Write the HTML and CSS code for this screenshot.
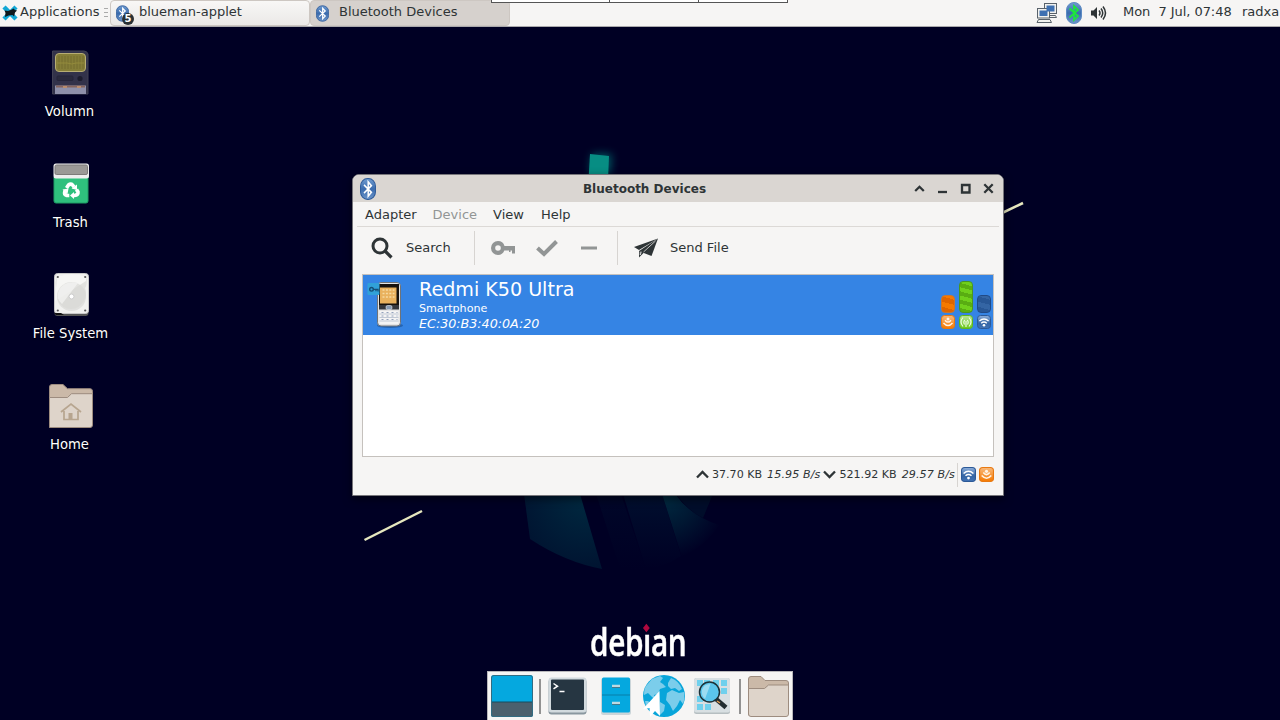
FILE: index.html
```html
<!DOCTYPE html>
<html lang="en">
<head>
<meta charset="utf-8">
<title>Desktop</title>
<link rel="stylesheet" href="styles.css">
</head>
<body>
<svg width="0" height="0" class="defs">
  <defs>
    <linearGradient id="blueG" x1="0" y1="0" x2="0" y2="1"><stop offset="0" stop-color="#6f9bd0"/><stop offset=".5" stop-color="#3b6cae"/><stop offset="1" stop-color="#6c95c9"/></linearGradient>
    <linearGradient id="orG" x1="0" y1="0" x2="0" y2="1"><stop offset="0" stop-color="#f8b97c"/><stop offset="1" stop-color="#f57900"/></linearGradient>
    <linearGradient id="grG" x1="0" y1="0" x2="0" y2="1"><stop offset="0" stop-color="#b9e59a"/><stop offset="1" stop-color="#6cc81c"/></linearGradient>
    <linearGradient id="wiG" x1="0" y1="0" x2="0" y2="1"><stop offset="0" stop-color="#8fb0dc"/><stop offset=".6" stop-color="#3465a4"/><stop offset="1" stop-color="#4273b5"/></linearGradient>
    <radialGradient id="tealA" gradientUnits="userSpaceOnUse" cx="585" cy="500" r="75"><stop offset="0" stop-color="#00283f"/><stop offset="1" stop-color="#001230"/></radialGradient>
    <radialGradient id="tealB" gradientUnits="userSpaceOnUse" cx="665" cy="497" r="62"><stop offset="0" stop-color="#002a40"/><stop offset=".5" stop-color="#001732"/><stop offset="1" stop-color="#000024"/></radialGradient>
    <linearGradient id="tealC" x1="0" y1="0" x2="0" y2="1"><stop offset="0" stop-color="#000f2e"/><stop offset="1" stop-color="#000024"/></linearGradient>
    <filter id="glow" x="-1" y="-1" width="3" height="3"><feGaussianBlur stdDeviation="4"/></filter>
    <symbol id="bt" viewBox="0 0 16 20"><rect x=".5" y=".5" width="15" height="19" rx="7" fill="url(#blueG)" stroke="#305d9b"/><path d="M4 6.2 11.4 13 8.2 16.5V3.5L11.4 7 4 13.8" fill="none" stroke="#fff" stroke-width="1.5"/></symbol>
    <symbol id="serial" viewBox="0 0 14 14"><rect x=".5" y=".5" width="13" height="13" rx="3" fill="url(#orG)" stroke="#e87911"/><path d="M2.500 8Q7 13 11.500 8M4 5.200Q7 9 10 5.200" fill="none" stroke="#fff3e5" stroke-width="1.500"/><circle cx="7" cy="4" r="1.500" fill="#fff3e5"/></symbol>
    <symbol id="wifi" viewBox="0 0 14 14"><rect x=".5" y=".5" width="13" height="13" rx="3" fill="url(#wiG)" stroke="#2c5997"/><path d="M2.400 6.100Q7 2 11.600 6.100M4.200 8.200Q7 5.800 9.800 8.200" fill="none" stroke="#fff" stroke-width="1.400"/><circle cx="7" cy="10.300" r="1.300" fill="#fff"/></symbol>
  </defs>
</svg>

<div class="desktop">
  <svg class="wallpaper" width="1280" height="720" viewBox="0 0 1280 720">
    <path d="M592 154h20l-2 20h-20z" fill="#00a99a" opacity=".5" filter="url(#glow)"/>
    <path d="M590 154 609 156 608 180H588.500z" fill="#078d83"/>
    <path d="M364.500 540 422 511" stroke="#e6e7bf" stroke-width="2.500"/>
    <path d="M1000 214 1023 203" stroke="#e6e7bf" stroke-width="2.500"/>
    <path d="M524 494H580L602 569Q565 562 530 539z" fill="url(#tealA)"/>
    <path d="M596 494H621L646 570 620 568z" fill="url(#tealC)" opacity=".45"/>
    <path d="M623 494H662L681 556Q665 567 646 569z" fill="url(#tealC)"/>
    <path d="M662 494H675Q691 516 719 525Q708 544 682 557z" fill="url(#tealB)"/>
    <path d="M676 494H713L703 518Q688 511 676 494z" fill="#000d2a"/>
  </svg>

  <div class="brand"><span>deb</span><span class="brand-i">ı<i class="diamond"></i></span><span>an</span></div>

  <div class="shortcuts">
    <div class="shortcut">
      <svg width="48" height="48" viewBox="0 0 48 48"><path d="M5.500 1H37q3 0 4 3V44H5.500z" fill="#32324a" stroke="#414153"/><rect x="8.500" y="3.500" width="30" height="18" rx="3.500" fill="#857e38" stroke="#b7ad74"/><path d="M12 6v13M15 6v13M18 6v13M21 6v13M24 6v13M27 6v13M30 6v13M33 6v13M36 6v13" stroke="#746c2f"/><path d="M10 13h10q5 2 9 0h8" stroke="#948b3c" fill="none"/><rect x="10" y="26" width="16" height="4.500" rx="1" fill="#2a2a3e" stroke="#25253a"/><circle cx="33" cy="28.500" r="2.600" fill="#1d1d2e"/><path d="M8 35.500h31V44H8z" fill="#8e90aa"/><path d="M9 35.500h29v2H9z" fill="#85645d"/><path d="M16 36h4v2h-4zM30 36h4v2h-4z" fill="#b98c6d"/></svg>
      <span class="nudge-a">Volumn</span>
    </div>
    <div class="shortcut">
      <svg width="48" height="48" viewBox="0 0 48 48"><path d="M7 16H41V40q0 2-2 2H9q-2 0-2-2z" fill="#2fc07d" stroke="#1e9d64"/><rect x="6.500" y="2.500" width="35.500" height="15" rx="2.500" fill="#eee"/><rect x="8" y="4" width="32.500" height="9.500" rx="1.500" fill="#9b9996" stroke="#7d7b79"/><g fill="none" stroke="#fff" stroke-width="3.600"><path d="M19.500 27l2-3q2.500-2 4.500 .5l1 1.500M29.500 28.500l1.500 2.500q.5 3-3.500 3.500h-1.500M22.300 34.500h-2.500q-3-1-2-4l.5-1"/></g><path d="M24.500 27.500l5.500-4v5.500zM27 31v7l-4-3.500zM15.500 28.500l6-1-1 5.500z" fill="#fff"/></svg>
      <span class="nudge-b">Trash</span>
    </div>
    <div class="shortcut">
      <svg width="48" height="48" viewBox="0 0 48 48"><rect x="7.500" y="3" width="34" height="41" rx="3" fill="#555"/><rect x="7.500" y="1.500" width="34" height="40" rx="3" fill="#f1f1ef" stroke="#c9c9c9"/><path d="M7 41h7l3 2H9z" fill="#111"/><path d="M10 5q14-5 29 0 2 7-1 11 2 5 0 11-5 10-14 10t-14-10q-2-6 0-11-3-4 0-11z" fill="#e2e2df"/><path d="M8 29 39 9V5Q25-1 10 5z" fill="#f6f6f4"/><circle cx="24.500" cy="24.500" r="14.500" fill="#d7d7d4" opacity=".65"/><path d="M12 18Q18 8 31 11L15 32Q8 26 12 18z" fill="#f5f5f3" opacity=".7"/><circle cx="24.500" cy="24.500" r="2.500" fill="#fff" stroke="#ccc"/><g fill="#555"><circle cx="10.800" cy="5" r="1.100"/><circle cx="38.200" cy="5" r="1.100"/><circle cx="10.800" cy="38.500" r="1.100"/><circle cx="38.200" cy="38.500" r="1.100"/></g></svg>
      <span class="nudge-b">File System</span>
    </div>
    <div class="shortcut">
      <svg width="48" height="48" viewBox="0 0 48 48"><path d="M2.500 44V4q0-2.500 2.500-2.500h11l4.500 4.200H43q2.500 0 2.500 2.500V22z" fill="#cbb9a8" stroke="#9d8c7f"/><path d="M2.500 44.500V14.500h18l4-3.800H45.500V42q0 2.500-2.500 2.500z" fill="#ded4ca" stroke="#9d8c7f"/><path d="M14 29l10-8 10 8M17 28v8.500h14V28" fill="none" stroke="#b7a58f" stroke-width="1.700"/><path d="M21.500 30h4v6h-4z" fill="#b7a58f"/></svg>
      <span class="nudge-a">Home</span>
    </div>
  </div>

  <header class="panel">
    <div class="apps">
      <svg width="16" height="16" viewBox="0 0 16 16"><path d="M2 2 14 14M14 2 2 14" stroke="#12a7d5" stroke-width="4.500"/><path d="M2.500 5.500 6 6l4-1.500 1.500-1L13 5l2 .5-2 2-1 4-1.500-1.500-4 .5L3 12l.5-4z" fill="#10181c"/></svg>
      <span class="apps-label">Applications</span>
      <i class="grip"></i>
    </div>
    <div class="task">
      <span class="task-icon"><svg width="13" height="17"><use href="#bt"/></svg><b class="count">5</b></span>
      <span class="task-label">blueman-applet</span>
    </div>
    <div class="task task-active">
      <span class="task-icon"><svg width="13" height="17"><use href="#bt"/></svg></span>
      <span class="task-label">Bluetooth Devices</span>
    </div>
    <div class="tray">
      <svg width="22" height="22" viewBox="0 0 22 22"><g stroke="#59626b" fill="#f2f2ef"><rect x="8.500" y="1.500" width="12" height="10"/><path d="M9 15.500h11.500l-1-2H9z"/><rect x="1.500" y="6.500" width="12" height="9.500"/><path d="M1 20.500h14.500l-1.500-3H2.500z"/></g><path d="M10.500 3.500h8v6h-8zM3.500 8.500h8v5.500h-8z" fill="#3e70b2"/></svg>
      <svg width="16" height="22" viewBox="0 0 16 22"><rect x=".5" y=".5" width="15" height="21" rx="7.500" fill="url(#blueG)" stroke="#5d8bc3"/><path d="M3.500 6.500 12 14 8 18V4l4 4-8.500 7.500" fill="none" stroke="#1de83a" stroke-width="1.700"/></svg>
      <svg width="17" height="16" viewBox="0 0 17 16"><path d="M1 5.500h2.500L7 2v12L3.500 10.500H1z" fill="#2e3436"/><path d="M9 5.500q2 2.500 0 5M11 3.500q3.500 4.500 0 9M13 1.500q5 6.500 0 13" stroke="#2e3436" stroke-width="1.500" fill="none"/></svg>
    </div>
    <span class="clock">Mon&nbsp; 7 Jul, 07:48</span>
    <span class="user">radxa</span>
  </header>
  <div class="notch"><i></i><i></i></div>

  <main class="window">
    <div class="titlebar">
      <svg width="16" height="22" viewBox="0 0 16 20" preserveAspectRatio="none"><use href="#bt"/></svg>
      <h1>Bluetooth Devices</h1>
      <div class="controls">
        <svg width="11" height="11" viewBox="0 0 11 11"><path d="M1.200 8 5.500 3.800 9.800 8"/></svg>
        <svg width="11" height="11" viewBox="0 0 11 11"><path d="M1 9h9"/></svg>
        <svg width="11" height="11" viewBox="0 0 11 11"><path d="M2 2h7.500v7.500H2z"/></svg>
        <svg width="11" height="11" viewBox="0 0 11 11"><path d="M1.300 1.300 9.700 9.700M9.700 1.300 1.300 9.700"/></svg>
      </div>
    </div>
    <nav class="menu"><span>Adapter</span><span class="off">Device</span><span>View</span><span class="help">Help</span></nav>
    <div class="toolbar">
      <div class="tool search">
        <svg width="22" height="22" viewBox="0 0 22 22"><circle cx="9" cy="9" r="7" fill="none" stroke="#2e3436" stroke-width="3"/><path d="M14 14l6.500 6.500" stroke="#2e3436" stroke-width="3.200"/></svg>
        <span>Search</span>
      </div>
      <i class="rule"></i>
      <div class="tool actions">
        <svg width="25" height="14" viewBox="0 0 25 14"><path d="M7 0a7 7 0 0 0 0 14 7 7 0 0 0 6.300-4.500H18V11h1.500V9.500H21v3h3V5H13.500A7 7 0 0 0 7 0zm0 4.200a2.800 2.800 0 1 1 0 5.600 2.800 2.800 0 0 1 0-5.600z" fill="#929595" fill-rule="evenodd"/></svg>
        <svg width="22" height="17" viewBox="0 0 22 17"><path d="M1.500 8 8 14 20.500 1.500" fill="none" stroke="#929595" stroke-width="4"/></svg>
        <svg width="16" height="4" viewBox="0 0 16 4"><path d="M0 .5h16v3H0z" fill="#929595"/></svg>
      </div>
      <i class="rule"></i>
      <div class="tool send">
        <svg width="24" height="20" viewBox="0 0 24 20"><path d="M24 .5 0 9l5 3z" fill="#2e3436"/><path d="M24 .5 5 13v6.500l4-4z" fill="#2e3436"/><path d="M24 .5 8.500 14.500 17.500 18z" fill="#2e3436"/><path d="M6.200 13.500v3.500l1.200-3.300M9.500 14l12-11" stroke="#f6f5f4" fill="none" stroke-width=".7"/></svg>
        <span>Send File</span>
      </div>
    </div>
    <div class="list">
      <div class="device">
        <svg class="phone" width="40" height="50" viewBox="0 0 40 50"><ellipse cx="24" cy="45.500" rx="13" ry="2.500" fill="#174b88" opacity=".55"/><rect x="11.500" y="2.500" width="23" height="43.500" rx="3.500" fill="#e4e4e4" stroke="#6f7378"/><path d="M13 4h20v21H13z" fill="#17120e"/><path d="M14 7.500h16.500v16H14z" fill="#e9b15d"/><path d="M16.500 10h12M16.500 13.500h12M16.500 17h12" stroke="#f6d9a0" stroke-width="1.600" stroke-dasharray="2 1.400"/><path d="M13 25h20v4.500H13z" fill="#35373c"/><rect x="20" y="25.500" width="6" height="4" rx="1.500" fill="#889bb3" stroke="#fff" stroke-width=".5"/><path d="M13.500 31h19v13h-19z" fill="#f4f4f4"/><path d="M13.500 34h19M13.500 37.500h19M13.500 41h19" stroke="#a9b4c6" stroke-width=".7"/><path d="M15.500 32.500h16M15.500 36h16M15.500 39.500h16" stroke="#93a2bc" stroke-width="1.200" stroke-dasharray="2 3"/><rect x="1.500" y="3" width="12" height="12" rx="1" fill="#31a1d8"/><circle cx="5.500" cy="9.300" r="1.800" fill="none" stroke="#164f77" stroke-width="1.400"/><path d="M7 9.300h5v2.300M10 9.300v2" stroke="#164f77" stroke-width="1.300" fill="none"/></svg>
        <div class="info"><div class="name">Redmi K50 Ultra</div><div class="kind">Smartphone</div><div class="mac">EC:30:B3:40:0A:20</div></div>
        <div class="levels">
          <div class="level"><i class="bar bar-orange"></i><svg width="14" height="14"><use href="#serial"/></svg></div>
          <div class="level"><i class="bar bar-green"></i><svg width="14" height="14" viewBox="0 0 14 14"><rect x=".5" y=".5" width="13" height="13" rx="3" fill="url(#grG)" stroke="#5fb818"/><path d="M4 2.500Q0 7 4 11.500M10 2.500Q14 7 10 11.500M5.800 5Q4 7 5.500 9.500M8.200 5Q10 7 8.500 9.500M7 6v6" fill="none" stroke="#f2ffe8" stroke-width="1.100"/></svg></div>
          <div class="level"><i class="bar bar-blue"></i><svg width="14" height="14"><use href="#wifi"/></svg></div>
        </div>
      </div>
    </div>
    <footer class="status">
      <svg width="13" height="9" viewBox="0 0 13 9"><path d="M1 7.500 6.500 2 12 7.500"/></svg>
      <span class="up">37.70 KB</span><em class="up-rate">15.95 B/s</em>
      <svg width="13" height="9" viewBox="0 0 13 9"><path d="M1 1.500 6.500 7 12 1.500"/></svg>
      <span class="down">521.92 KB</span><em class="down-rate">29.57 B/s</em>
      <i class="status-rule"></i>
      <svg class="badge" width="15" height="15"><use href="#wifi"/></svg>
      <svg class="badge" width="15" height="15"><use href="#serial"/></svg>
    </footer>
  </main>

  <div class="dock">
    <svg width="42" height="42" viewBox="0 0 42 42"><rect width="42" height="42" rx="2.500" fill="#05a8df"/><path d="M0 27h42v12.500q0 2.500-2.500 2.500h-37Q0 42 0 39.500z" fill="#4b606d"/><path d="M0 27h42" stroke="#174c60"/><rect x=".5" y=".5" width="41" height="41" rx="2.500" fill="none" stroke="#326c82"/></svg>
    <i></i>
    <svg width="40" height="38" viewBox="0 0 40 38"><rect x=".5" y="2" width="38" height="35.500" rx="3" fill="#8a979f"/><rect x=".5" y=".5" width="38" height="35" rx="3" fill="#d2dade"/><rect x="3" y="2.500" width="33" height="30.500" rx="1" fill="#263642"/><path d="M5.500 6.500l4 2.700-4 2.700" stroke="#fff" stroke-width="1.500" fill="none"/><path d="M11.500 14.500h5" stroke="#fff" stroke-width="1.500"/></svg>
    <svg width="30" height="38" viewBox="0 0 30 38"><rect y="1" width="30" height="37" rx="2.500" fill="#cbd5d9"/><rect x="1" y=".5" width="28" height="35" rx="1.500" fill="#05a8df"/><path d="M1 18h28" stroke="#087fa9"/><path d="M11 9h8M11 26h8" stroke="#bed9e2" stroke-width="2.500"/><path d="M11 10.500h8M11 27.500h8" stroke="#44798c"/></svg>
    <svg width="42" height="42" viewBox="0 0 42 42"><circle cx="21" cy="21" r="21" fill="#08a5da"/><path d="M3 11 9 4 17 1 20 3 17 7 20 9 23 12 17 14 15 19 11 20 13 25 9 22 5 18 1 20Q1 14 3 11zM25 8 28 3Q36 6 39 14L36 16 32 13 28 14 25 11zM24 18 29 15 36 18 41 17Q42 24 40 29L37 25 34 31 30 36 27 30 23 25zM17 27 22 30 21 36 17 40zM5 26 9 29 5 34Q2 30 2 26z" fill="#7bcdeb"/><path d="M16.500 16 0 34l6.500-1 .5 9 5-6 5 5z" fill="#fff"/></svg>
    <svg width="36" height="36" viewBox="0 0 36 36"><rect width="36" height="36" rx="2.500" fill="#b6bec1"/><rect width="36" height="34.500" rx="2.500" fill="#d8dfe2"/><path d="M3 2h6v6H3zM10 2h6v6h-6zM19 2h6v6h-6zM27 2h6v6h-6zM27 10h6v6h-6zM3 18h6v6H3zM3 26h6v6H3zM11 26h6v6h-6z" fill="#6fd0ed"/><path d="M22 21l10 8.500" stroke="#222d31" stroke-width="4.500"/><circle cx="15.500" cy="14" r="10" fill="#5bc5ec" stroke="#1c3138" stroke-width="1.500"/><path d="M8 12Q9.500 6 16.500 6L11 21Q7 17 8 12z" fill="#b8e5f5" opacity=".7"/><path d="M23 23l3 2" stroke="#e29d54" stroke-width="1.500"/></svg>
    <i></i>
    <svg width="41" height="41" viewBox="0 0 41 41"><path d="M.5 39V3Q.5.500 3 .500H13L17 4.500H38q2.500 0 2.500 2.500V20z" fill="#cbb9a8" stroke="#9d8c7f"/><path d="M.5 38V12.500H16.500L20.500 9H40.500V38q0 2.500-2.500 2.500H3Q.5 40.500.5 38z" fill="#ded4ca" stroke="#9d8c7f"/></svg>
  </div>
</div>
</body>
</html>
```
FILE: styles.css
```css
* { box-sizing: border-box; }
body { margin: 0; font: 13px/16px "DejaVu Sans", sans-serif; color: #2e3436; }
svg { display: block; flex: none; }
.defs { position: absolute; }
.desktop { position: relative; width: 1280px; height: 720px; overflow: hidden; background: #000024; white-space: nowrap; }
.wallpaper { position: absolute; inset: 0; }

.brand { position: absolute; left: 590px; top: 622px; display: flex; transform: scaleX(.805); transform-origin: 0 0; color: #fff; font: 600 37px/40px "Open Sans", sans-serif; letter-spacing: -.5px; -webkit-text-stroke: .5px #fff; }
.brand-i { position: relative; }
.diamond { position: absolute; left: 1px; top: 3px; width: 6px; height: 6px; background: #b0083f; transform: rotate(45deg); }

.shortcuts { display: flex; flex-direction: column; padding: 50px 0 0 15px; width: 127px; }
.shortcut { display: flex; flex-direction: column; align-items: center; height: 111px; gap: 6px; color: #fff; font-size: 13.2px; text-shadow: 0 1px 2px #000; }
.nudge-a { margin-right: 3px; }
.nudge-b { margin-right: 1px; }

.panel { position: absolute; inset: 0 0 auto; height: 27px; display: flex; background: #f6f5f4; border-bottom: 1px solid #aaa9ac; line-height: 24px; }
.apps { width: 110px; display: flex; align-items: center; padding-left: 2px; gap: 2px; }
.apps-label { width: 80px; padding-bottom: 2px; }
.grip { width: 4px; height: 10px; margin-left: 2px; background: repeating-linear-gradient(#aaa 0 1px, transparent 1px 4px); }
.task { width: 200px; height: 26px; display: flex; align-items: center; border: 1px solid #cdc7c2; border-radius: 4px; padding-left: 5px; background: linear-gradient(#f8f7f6, #ebe9e7); }
.task-active { background: #d6d1cd; }
.task-icon { position: relative; width: 23px; }
.task-label { line-height: 22px; padding-bottom: 2px; }
.count { position: absolute; left: 6px; top: 8px; width: 12px; height: 12px; border-radius: 6px; background: #293033; color: #fff; font-size: 10px; line-height: 12px; text-align: center; }
.tray { margin-left: 526px; width: 87px; display: flex; align-items: center; gap: 8px; }
.clock { width: 119px; letter-spacing: -.05px; }
.user { width: 38px; }
.notch { position: absolute; left: 491px; top: -1px; width: 297px; height: 4px; border: 1px solid #555; background: #fff; display: flex; gap: 88px; padding-left: 117px; }
.notch i { width: 1px; height: 2px; background: #555; }

.window { position: absolute; left: 352px; top: 174px; width: 652px; height: 322px; border: 1px solid #77767b; border-radius: 7px 7px 0 0; background: #f6f5f4; box-shadow: 0 3px 8px #0008; }
.titlebar { height: 27px; display: flex; align-items: center; padding: 0 9px 0 7px; background: #dad6d2; border-radius: 6px 6px 0 0; }
.titlebar h1 { flex: 1; margin: 0; padding-right: 1px; font-size: 12px; line-height: 16px; text-align: center; }
.controls { display: flex; gap: 12px; }
.controls path { fill: none; stroke: #2e3436; stroke-width: 2.3; }
.menu { height: 25px; margin: 0 4px; padding: 0 8px; display: flex; gap: 16px; line-height: 25px; border-bottom: 1px solid #dcd9d6; }
.help { margin-left: 1px; }
.off { color: #929595; }
.toolbar { height: 47px; display: flex; padding: 4px 0 0; }
.tool { height: 34px; display: flex; align-items: center; }
.search { width: 121px; padding-left: 18px; gap: 13px; }
.rule { width: 1px; height: 34px; background: #d7d4d1; }
.actions { width: 142px; padding-left: 16px; gap: 20px; }
.actions svg:last-child { margin-left: 3px; }
.send { padding-left: 16px; gap: 12px; }
.list { height: 183px; margin: 0 9px; border: 1px solid #c5c1bd; background: #fff; }
.device { display: flex; height: 60px; background: #3584e4; color: #fff; }
.phone { margin: 5px 0 0 3px; }
.info { margin: 3px 0 0 13px; }
.name { font-size: 19.1px; line-height: 23px; }
.kind { font-size: 11.1px; line-height: 15px; }
.mac { font-size: 12.7px; line-height: 16px; font-style: italic; }
.levels { margin: 0 2px 0 auto; padding-bottom: 6px; display: flex; align-items: flex-end; gap: 4px; }
.level { display: flex; flex-direction: column; gap: 2px; }
.bar { width: 14px; border: 1px solid; border-radius: 4px; }
.bar-orange { height: 18px; border-color: #c87632; background: repeating-linear-gradient(15deg, #df6500 0 5px, #f57900 5px 10px); }
.bar-green { height: 32px; border-color: #49971f; background: repeating-linear-gradient(15deg, #59ad12 0 4px, #70d01c 4px 8px); }
.bar-blue { height: 18px; border-color: #204a87; background: repeating-linear-gradient(15deg, #285796 0 5px, #3465a4 5px 10px); }
.status { height: 35px; padding-right: 9px; display: flex; align-items: center; justify-content: flex-end; font-size: 11.1px; }
.status path { fill: none; }
.status > svg:not(.badge) path { stroke: #2e3436; stroke-width: 2.3; }
.up, .down { margin: 0 5px 0 3px; }
.up-rate, .down-rate { letter-spacing: .1px; }
.up-rate { margin-right: 3px; }
.status-rule { width: 1px; height: 24px; margin: 0 3px 0 2px; background: #d7d4d1; }
.badge + .badge { margin-left: 3px; }

.dock { position: absolute; left: 487px; top: 671px; width: 306px; height: 49px; display: grid; grid-template-columns: 48px 8px repeat(4, 48px) 8px 48px; place-items: center; background: #f6f5f4; border: 1px solid #b9b8bb; border-bottom: 0; }
.dock i { width: 2px; height: 35px; background: #929292; }
```
